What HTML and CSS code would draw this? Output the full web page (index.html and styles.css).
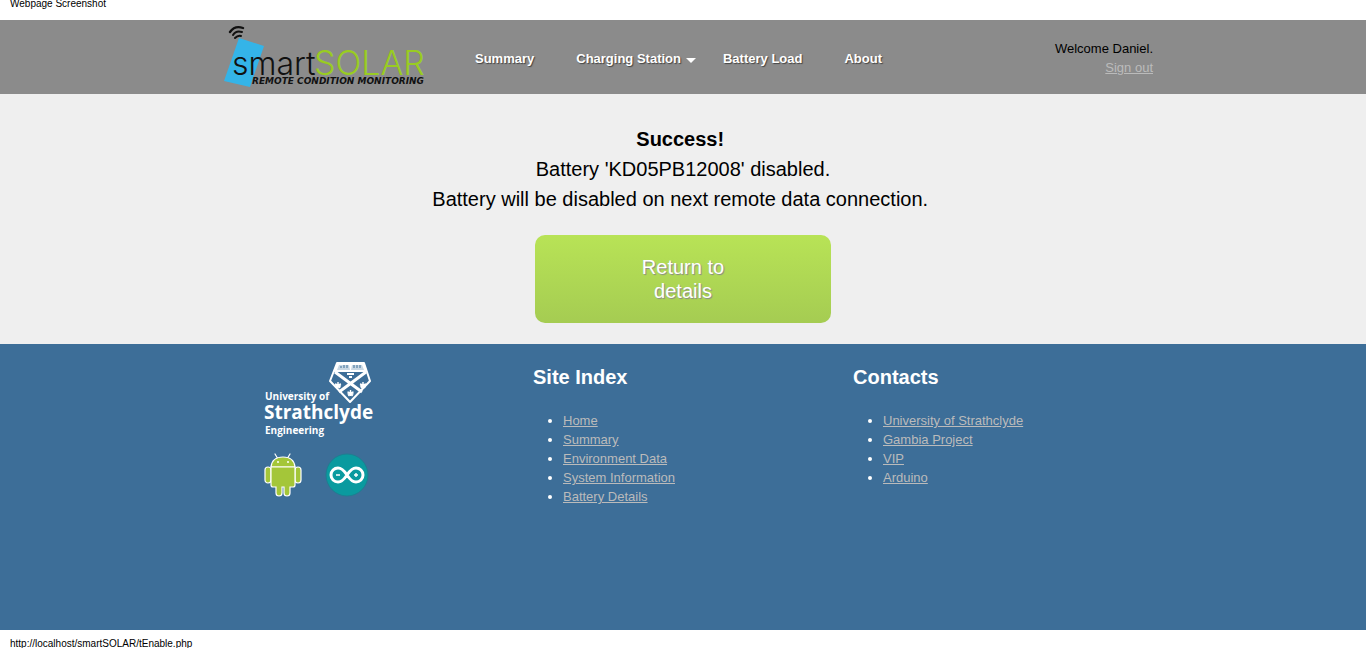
FILE: index.html
```
<!DOCTYPE html>
<html lang="en">
<head>
<meta charset="utf-8">
<title>smartSOLAR</title>
<link rel="stylesheet" href="styles.css">
</head>
<body>
<div class="caption">Webpage Screenshot</div>
<header class="header">
  <div class="container header-row">
    <a class="logo" href="#" aria-label="smartSOLAR home">
      <svg width="208" height="66" viewBox="0 0 208 66">
        <path d="M18 14 43 22 29 63 3 57Z" fill="#34b4e8"/>
        <g fill="none" stroke="#111" stroke-width="2" stroke-linecap="round">
          <path d="M9 8Q14 1 22 4" stroke-width="2.4"/>
          <path d="M12 11Q15 6 21 8"/>
          <path d="M14 14Q17 11 20 12"/>
        </g>
        <text x="11" y="51" class="logo-smart">smart</text>
        <text x="93" y="51" class="logo-solar">SOLAR</text>
        <text x="31" y="60" class="logo-tag">REMOTE CONDITION MONITORING</text>
      </svg>
    </a>
    <nav class="nav">
      <a href="#">Summary</a>
      <a href="#" class="has-menu">Charging Station</a>
      <a href="#">Battery Load</a>
      <a href="#">About</a>
    </nav>
    <div class="account">
      <div>Welcome Daniel.</div>
      <a href="#">Sign out</a>
    </div>
  </div>
</header>
<main class="main">
  <p class="message"><strong>Success!</strong>&nbsp;<br>Battery 'KD05PB12008' disabled.<br>Battery will be disabled on next remote data connection.&nbsp;</p>
  <a class="button" href="#">Return to details</a>
</main>
<footer class="footer">
  <div class="container footer-row">
    <div class="partners">
      <a href="#" class="university" aria-label="University of Strathclyde Engineering">
        <svg width="112" height="80" viewBox="0 0 112 80">
          <path d="M73 3h27l6 18-20 21-20-21Z" fill="#3d6e98" stroke="#fff" stroke-width="2" stroke-linejoin="round"/>
          <path d="M73 3h27l3 9H70Z" fill="#fff"/>
          <path d="M75 5h10l1 5H73ZM98 5H88l-1 5h13Z" fill="#c9d8e4"/>
          <path d="M77 6v2m3-3v3m3-3v3m7-3v3m3-3v3m3-3v3" stroke="#3d6e98" fill="none"/>
          <g stroke="#fff" fill="none">
            <path d="M71 12 98 32M102 12 75 32" stroke-width="3"/>
            <path d="M83 14h7M85 17h3" stroke-width="2"/>
            <path d="M74 22v6M71 24l6 2M77 24l-6 2M72 28l2-3 2 3" stroke-width="1.4"/>
            <path d="M99 22v6M96 24l6 2M102 24l-6 2M97 28l2-3 2 3" stroke-width="1.4"/>
            <path d="M86.500 30v6M83.500 32l6 2M89.500 32l-6 2M84.500 36l2-3 2 3" stroke-width="1.4"/>
          </g>
          <text x="1" y="40" class="uni-small">University of</text>
          <text x="0" y="59" class="uni-large">Strathclyde</text>
          <text x="1" y="74" class="uni-small">Engineering</text>
        </svg>
      </a>
      <div class="badges">
        <a href="#" aria-label="Android">
          <svg width="38" height="44" viewBox="0 0 38 44">
            <g fill="#a4c639" stroke="#fff" stroke-width="1.2">
              <path d="M11 1 14 6M26 1 23 6" stroke-linecap="round"/>
              <rect x="1" y="14" width="6" height="16" rx="3"/>
              <rect x="31" y="14" width="6" height="16" rx="3"/>
              <path d="M7 14q1-10 12-10t12 10Z"/>
              <path d="M7 14h24v18q0 2-2 2h-3v6q0 3-3 3t-3-3v-6h-2v6q0 3-3 3t-3-3v-6H9q-2 0-2-2Z"/>
            </g>
            <circle cx="14" cy="9" r="1" fill="#fff"/><circle cx="24" cy="9" r="1" fill="#fff"/>
          </svg>
        </a>
        <a href="#" aria-label="Arduino">
          <svg width="44" height="44" viewBox="0 0 44 44">
            <circle cx="22" cy="22" r="21" fill="#0a9a9f" stroke="#1d7f91"/>
            <path d="M22 22C18 16 16 15 13 15a7 7 0 0 0 0 14C16 29 18 28 22 22S28 15 31 15a7 7 0 0 1 0 14C28 29 26 28 22 22Z" fill="none" stroke="#fff" stroke-width="3"/>
            <path d="M11 22h4M29 22h4M31 20v4" stroke="#fff" stroke-width="1.4"/>
          </svg>
        </a>
      </div>
    </div>
    <section class="links">
      <h2>Site Index</h2>
      <ul>
        <li><a href="#">Home</a></li>
        <li><a href="#">Summary</a></li>
        <li><a href="#">Environment Data</a></li>
        <li><a href="#">System Information</a></li>
        <li><a href="#">Battery Details</a></li>
      </ul>
    </section>
    <section class="links">
      <h2>Contacts</h2>
      <ul>
        <li><a href="#">University of Strathclyde</a></li>
        <li><a href="#">Gambia Project</a></li>
        <li><a href="#">VIP</a></li>
        <li><a href="#">Arduino</a></li>
      </ul>
    </section>
  </div>
</footer>
<div class="caption caption-bottom">http://localhost/smartSOLAR/tEnable.php</div>
</body>
</html>
```
FILE: styles.css
```
* { box-sizing: border-box; }

body {
  margin: 0;
  background: #fff;
  color: #000;
  font: 13px/19px "Liberation Sans", Arial, sans-serif;
}

.container {
  max-width: 960px;
  margin: 0 auto;
}

.caption {
  padding: 0 10px 12px;
  font-size: 10px;
  line-height: 8px;
}

.caption-bottom { padding: 10px 10px 0; }

.header { background: #8b8b8b; }

.header-row {
  display: flex;
  align-items: flex-start;
  padding: 4px 10px 4px 18px;
}

.logo svg { display: block; }

.logo-smart,
.logo-solar {
  font-family: Inter, "Liberation Sans", sans-serif;
  font-weight: 300;
}

.logo-smart { font-size: 32px; fill: #111; }
.logo-solar { font-size: 34px; fill: #9c2; }

.logo-tag {
  font: italic bold 9px "DejaVu Sans", sans-serif;
  fill: #111;
}

.nav {
  display: flex;
  gap: 2px;
  margin-left: 26px;
  padding-top: 25px;
}

.nav a {
  position: relative;
  padding: 0 20px;
  color: #fff;
  font-weight: bold;
  text-decoration: none;
  text-shadow: 1px 1px 1px #444;
}

.has-menu::after {
  content: "";
  position: absolute;
  top: 9px;
  right: 5px;
  border: 5px solid transparent;
  border-top-color: #fff;
  border-bottom: 0;
}

.account {
  margin-left: auto;
  padding-top: 15px;
  text-align: right;
}

.account a,
.links a { color: #bbb; }

.main {
  padding: 30px 20px 21px;
  background: #efefef;
  text-align: center;
}

.message {
  margin: 0 0 21px;
  font-size: 20px;
  line-height: 30px;
}

.button {
  display: block;
  width: 296px;
  margin: 0 auto;
  padding: 20px 96px;
  border-radius: 10px;
  background: linear-gradient(#b8e356, #a5cc52);
  color: #fff;
  font-size: 20px;
  line-height: 24px;
  text-decoration: none;
  text-shadow: 1px 1px 1px #888;
}

.footer {
  min-height: 286px;
  background: #3d6e98;
  color: #fff;
}

.footer-row {
  display: grid;
  grid-template-columns: repeat(3, 1fr);
}

.partners { padding: 16px 0 0 61px; }

.partners svg { display: block; }

.badges {
  display: flex;
  gap: 23px;
  margin-top: 13px;
}

.uni-small,
.uni-large {
  font-family: "Open Sans", "Noto Sans", sans-serif;
  font-weight: bold;
  fill: #fff;
}

.uni-small { font-size: 10px; }
.uni-large { font-size: 19px; }

.links { padding: 21px 10px 0; }

.links h2 {
  margin: 0;
  font-size: 20px;
  line-height: 24px;
}

.links ul {
  margin: 22px 0 0;
  padding-left: 30px;
}
```
